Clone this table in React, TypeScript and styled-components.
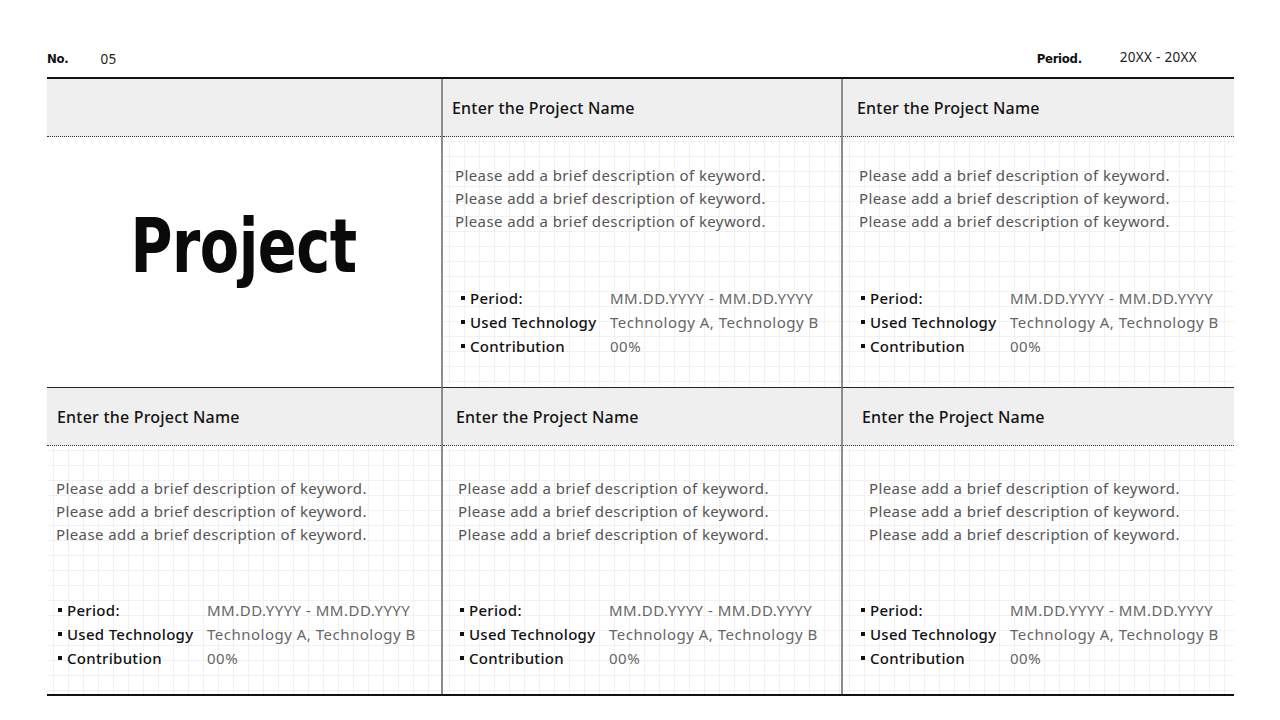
import React from "react";
import styled, { createGlobalStyle } from "styled-components";

const Global = createGlobalStyle`
  html, body { margin: 0; padding: 0; background: #fff; }
  body { width: 1280px; height: 720px; overflow: hidden; font-family: "Noto Sans", "Open Sans", sans-serif; color: #111; }
`;

const Page = styled.div`
  width: 1280px;
  height: 720px;
  box-sizing: border-box;
  padding: 44px 46px 0 47px;
`;

const TopBar = styled.div`
  display: flex;
  justify-content: space-between;
  align-items: center;
  height: 33px;
  box-sizing: border-box;
  padding: 0 37px 6px 0;
`;

const MetaGroup = styled.div<{ $gap: number }>`
  display: flex;
  align-items: baseline;
  gap: ${(p) => p.$gap}px;
`;

const MetaLabel = styled.span`
  font-family: "DejaVu Sans Condensed", "DejaVu Sans", sans-serif;
  font-weight: 700;
  font-size: 13px;
  letter-spacing: -0.3px;
  color: #111;
`;

const MetaValue = styled.span<{ $shift?: number }>`
  font-family: "Noto Sans", sans-serif;
  font-size: 13.5px;
  letter-spacing: 0.3px;
  color: #222;
  position: relative;
  top: ${(p) => p.$shift ?? 0}px;
`;

const Board = styled.div`
  display: grid;
  grid-template-columns: 394px 400px 393px;
  grid-template-rows: 308px 307px;
  border-top: 2px solid #111;
  border-bottom: 2px solid #111;
`;

const Cell = styled.div<{ $col: number; $row: number }>`
  display: flex;
  flex-direction: column;
  box-sizing: border-box;
  border-left: ${(p) => (p.$col > 0 ? "2px solid #8c8c8c" : "none")};
  border-top: ${(p) => (p.$row > 0 ? "1px solid #222" : "none")};
  min-width: 0;
`;

const CellHead = styled.div<{ $pad: number }>`
  height: 58px;
  flex-shrink: 0;
  box-sizing: border-box;
  background: #efefef;
  border-bottom: 1px dotted #333;
  display: flex;
  align-items: center;
  padding-left: ${(p) => p.$pad}px;
  font-size: 16px;
  font-weight: 500;
  letter-spacing: 0.2px;
  color: #141414;
`;

const CellBody = styled.div<{ $top: number; $bottom: number }>`
  flex: 1;
  display: flex;
  flex-direction: column;
  justify-content: space-between;
  padding-top: ${(p) => p.$top}px;
  padding-bottom: ${(p) => p.$bottom}px;
  background-color: #fff;
  background-image:
    linear-gradient(to right, #f1f1f1 1px, transparent 1px),
    linear-gradient(to bottom, #f1f1f1 1px, transparent 1px);
  background-size: 15px 15px;
  background-position: 6px 4px;
`;

const TitleBody = styled.div`
  flex: 1;
  display: flex;
  align-items: center;
  justify-content: center;
  padding-bottom: 32px;
`;

const BigTitle = styled.h1`
  margin: 0;
  font-family: "DejaVu Sans Condensed", "DejaVu Sans", sans-serif;
  font-weight: 700;
  font-size: 74px;
  letter-spacing: -0.5px;
  color: #0a0a0a;
  transform: scaleX(0.86);
`;

const Desc = styled.div<{ $pad: number }>`
  padding-left: ${(p) => p.$pad}px;
  font-size: 15px;
  line-height: 23px;
  letter-spacing: 0.4px;
  color: #555;
`;

const InfoList = styled.div<{ $pad: number }>`
  padding-left: ${(p) => p.$pad}px;
  display: grid;
  grid-template-columns: 149px 1fr;
  grid-auto-rows: 24px;
  align-items: center;
  font-size: 15px;
`;

const InfoLabel = styled.div`
  display: flex;
  align-items: center;
  gap: 5px;
  color: #111;
  font-weight: 500;
  letter-spacing: 0.3px;
  white-space: nowrap;
`;

const Bullet = styled.span`
  width: 4px;
  height: 4px;
  background: #111;
  display: inline-block;
`;

const InfoValue = styled.div`
  color: #666;
  letter-spacing: 0.5px;
  white-space: nowrap;
`;

type Card = { row: number; col: number; head: number; desc: number; list: number };

const cards: Card[] = [
  { row: 0, col: 1, head: 9, desc: 12, list: 18 },
  { row: 0, col: 2, head: 14, desc: 16, list: 18 },
  { row: 1, col: 0, head: 10, desc: 9, list: 11 },
  { row: 1, col: 1, head: 13, desc: 15, list: 17 },
  { row: 1, col: 2, head: 19, desc: 26, list: 18 },
];

const info = [
  ["Period:", "MM.DD.YYYY - MM.DD.YYYY"],
  ["Used Technology", "Technology A, Technology B"],
  ["Contribution", "00%"],
];

const line = "Please add a brief description of keyword.";

export default function App() {
  return (
    <>
      <Global />
      <Page>
        <TopBar>
          <MetaGroup $gap={32}>
            <MetaLabel>No.</MetaLabel>
            <MetaValue $shift={1}>05</MetaValue>
          </MetaGroup>
          <MetaGroup $gap={38}>
            <MetaLabel>Period.</MetaLabel>
            <MetaValue $shift={-1}>20XX - 20XX</MetaValue>
          </MetaGroup>
        </TopBar>
        <Board>
          <Cell $col={0} $row={0}>
            <CellHead $pad={10} />
            <TitleBody>
              <BigTitle>Project</BigTitle>
            </TitleBody>
          </Cell>
          {cards.map((c, i) => (
            <Cell key={i} $col={c.col} $row={c.row}>
              <CellHead $pad={c.head}>Enter the Project Name</CellHead>
              <CellBody $top={c.row === 0 ? 27 : 31} $bottom={c.row === 0 ? 29 : 24}>
                <Desc $pad={c.desc}>
                  {line}
                  <br />
                  {line}
                  <br />
                  {line}
                </Desc>
                <InfoList $pad={c.list}>
                  {info.map(([k, v]) => (
                    <React.Fragment key={k}>
                      <InfoLabel>
                        <Bullet />
                        {k}
                      </InfoLabel>
                      <InfoValue>{v}</InfoValue>
                    </React.Fragment>
                  ))}
                </InfoList>
              </CellBody>
            </Cell>
          ))}
        </Board>
      </Page>
    </>
  );
}
